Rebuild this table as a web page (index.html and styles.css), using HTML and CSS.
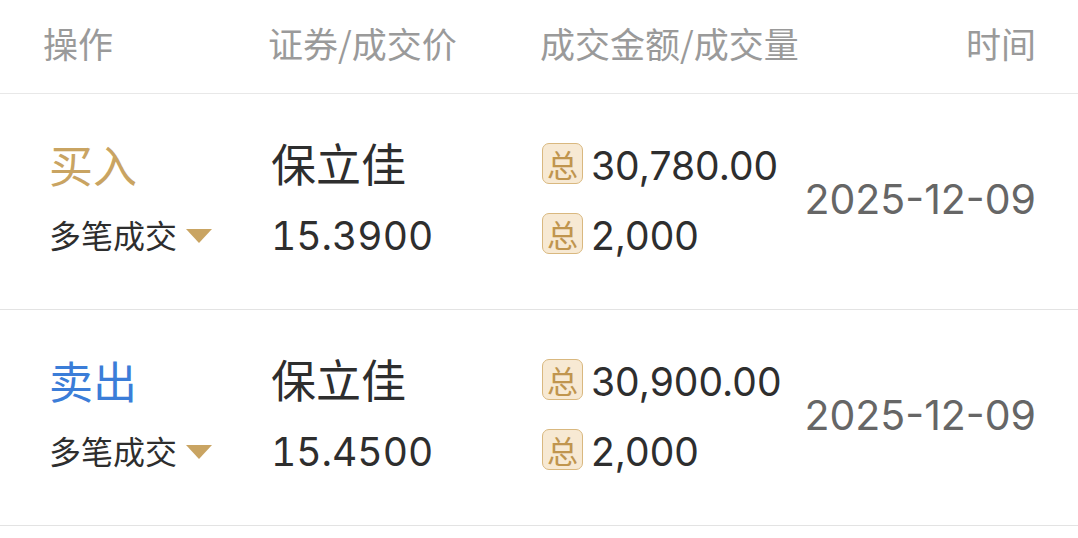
FILE: index.html
```html
<!DOCTYPE html>
<html lang="zh-CN">
<head>
<meta charset="utf-8">
<link rel="stylesheet" href="styles.css">
</head>
<body>
<div class="table">
  <div class="head">
    <div class="c1">操作</div>
    <div class="c2">证券/成交价</div>
    <div class="c3">成交金额/成交量</div>
    <div class="c4">时间</div>
  </div>
  <div class="row">
    <div class="c1 cell1">
      <div class="op buy">买入</div>
      <div class="multi">多笔成交<span class="tri"></span></div>
    </div>
    <div class="c2 cell2">
      <div class="name">保立佳</div>
      <div class="num price">15.3900</div>
    </div>
    <div class="c3 cell3">
      <div class="amt"><span class="badge">总</span><span class="num">30,780.00</span></div>
      <div class="amt"><span class="badge">总</span><span class="num">2,000</span></div>
    </div>
    <div class="c4 date">2025-12-09</div>
  </div>
  <div class="row">
    <div class="c1 cell1">
      <div class="op sell">卖出</div>
      <div class="multi">多笔成交<span class="tri"></span></div>
    </div>
    <div class="c2 cell2">
      <div class="name">保立佳</div>
      <div class="num price">15.4500</div>
    </div>
    <div class="c3 cell3">
      <div class="amt"><span class="badge">总</span><span class="num">30,900.00</span></div>
      <div class="amt"><span class="badge">总</span><span class="num">2,000</span></div>
    </div>
    <div class="c4 date">2025-12-09</div>
  </div>
</div>
</body>
</html>
```

FILE: styles.css
```css
html, body {
  margin: 0;
  padding: 0;
  background: #fff;
}
body {
  font-family: "Noto Sans CJK SC", "Noto Sans", sans-serif;
  color: #2e2e2e;
  width: 1078px;
  height: 538px;
  overflow: hidden;
}
.head, .row {
  display: flex;
  align-items: center;
  padding: 0 42px 0 43px;
}
.head {
  height: 94px;
  box-sizing: border-box;
  padding-bottom: 8px;
  border-bottom: 1px solid #e8e8e8;
  font-size: 35px;
  color: #9a9a9a;
}
.row {
  height: 215px;
  border-bottom: 1.5px solid #e3e3e3;
}
.c1 { width: 225px; flex-shrink: 0; }
.c2 { width: 272px; flex-shrink: 0; }
.c3 { flex: 1; }
.c4 { text-align: right; white-space: nowrap; flex-shrink: 0; }
.cell1 { padding-left: 6px; box-sizing: border-box; }
.cell2 { padding-left: 3px; box-sizing: border-box; }
.cell1, .cell2, .cell3 {
  display: flex;
  flex-direction: column;
  margin-top: -6px;
}
.cell1 > div, .cell2 > div, .cell3 > div {
  height: 70px;
  display: flex;
  align-items: center;
}
.op {
  font-size: 44px;
}
.buy { color: #c9a462; }
.sell { color: #3b7dd8; }
.multi {
  font-size: 32px;
  color: #2e2e2e;
}
.tri {
  display: inline-block;
  width: 0;
  height: 0;
  margin-left: 9px;
  margin-top: 4px;
  border-left: 13px solid transparent;
  border-right: 13px solid transparent;
  border-top: 14px solid #c9a462;
}
.name {
  font-size: 45px;
}
.num, .date {
  font-family: Inter, "Noto Sans CJK SC", sans-serif;
  font-weight: 400;
}
.num {
  font-size: 39px;
  padding-top: 3px;
}
.price {
  font-variant-numeric: tabular-nums;
}
.cell3 { padding-left: 2px; }
.badge {
  width: 41px;
  height: 41px;
  box-sizing: border-box;
  border: 1.5px solid #d9b87f;
  background: #f7e9d3;
  border-radius: 7px;
  color: #c0954e;
  font-size: 31px;
  display: inline-flex;
  align-items: center;
  justify-content: center;
  line-height: 1;
  margin-right: 8px;
}
.date {
  font-size: 41px;
  color: #666;
  margin-top: -6px;
}
```
